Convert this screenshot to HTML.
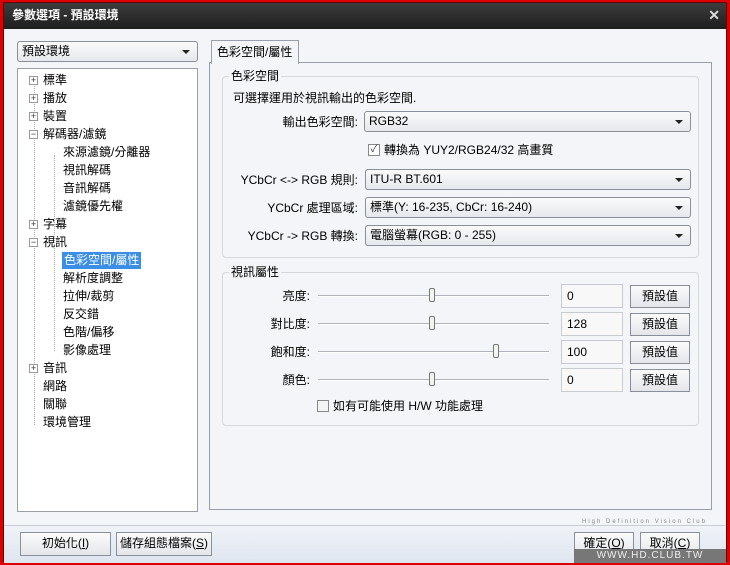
<!DOCTYPE html><html><head><meta charset="utf-8"><style>
*{box-sizing:border-box;margin:0;padding:0}
body{width:730px;height:565px;overflow:hidden;font-family:"Liberation Sans","Noto Sans CJK TC",sans-serif;font-size:12px;line-height:15px;color:#000;background:#d00}
.win{position:absolute;left:3px;top:2px;width:724px;height:560px;background:#f4f5f8;border:1px solid #600}
.title{position:absolute;left:0;top:0;width:100%;height:26px;background:linear-gradient(#3c3c3c,#1e1e1e);color:#fff;font-weight:bold;font-size:12px;line-height:24px;padding-left:8px}
.x{position:absolute;right:6px;top:0;color:#ddd;font-size:14px}
.a{position:absolute}
.combo{position:absolute;border:1px solid #8a8f99;border-radius:3px;background:linear-gradient(#fafafa,#e6e8ec);height:21px;line-height:19px;padding-left:4px;font-size:12px}
.combo:after{content:"";position:absolute;right:7px;top:8px;border:4px solid transparent;border-top:4px solid #222}
.box{position:absolute;border:1px solid #9aa0aa;background:#fff}
.grp{position:absolute;border:1px solid #d6d8dc;border-radius:4px}
.gl{position:absolute;top:-8px;left:6px;background:#f4f5f8;padding:0 2px}
.btn{position:absolute;border:1px solid #8a8f99;background:linear-gradient(#fbfbfb,#e4e6ea);text-align:center;line-height:21px;height:23px}
.edit{position:absolute;border:1px solid #c8cbd0;background:#f8f8f8;height:24px;line-height:22px;padding-left:5px;width:62px}
.trk{position:absolute;height:2px;background:#b0b4ba;border-bottom:1px solid #fff;width:231px}
.thm{position:absolute;width:6px;height:14px;border:1px solid #777;border-radius:2px;background:#f3f3f3;top:-7px}
.t{position:absolute;white-space:nowrap}
.pl{position:absolute;width:9px;height:9px;border:1px solid #999;background:#fff;font-size:9px;line-height:7px;text-align:center;color:#333}
.r{text-align:right}
</style></head><body><div class="win">
<div class="title">參數選項 - 預設環境<span class="x">✕</span></div>
<div class="combo" style="left:13px;top:38px;width:181px">預設環境</div>
<div class="box" style="left:13px;top:65px;width:181px;height:444px">
<div style="position:absolute;left:16px;top:14px;width:0;height:342px;border-left:1px dotted #aaa"></div>
<div style="position:absolute;left:36px;top:86px;width:0;height:104px;border-left:1px dotted #aaa"></div>
<div style="position:absolute;left:36px;top:176px;width:0;height:106px;border-left:1px dotted #aaa"></div>
</div>
<div class="a" style="left:13px;top:65px;width:181px">
<div class="pl" style="left:12px;top:8px">+</div><div class="t" style="left:26px;top:5px">標準</div>
<div class="pl" style="left:12px;top:26px">+</div><div class="t" style="left:26px;top:23px">播放</div>
<div class="pl" style="left:12px;top:44px">+</div><div class="t" style="left:26px;top:41px">裝置</div>
<div class="pl" style="left:12px;top:62px">−</div><div class="t" style="left:26px;top:59px">解碼器/濾鏡</div>
<div class="t" style="left:46px;top:77px">來源濾鏡/分離器</div>
<div class="t" style="left:46px;top:95px">視訊解碼</div>
<div class="t" style="left:46px;top:113px">音訊解碼</div>
<div class="t" style="left:46px;top:131px">濾鏡優先權</div>
<div class="pl" style="left:12px;top:152px">+</div><div class="t" style="left:26px;top:149px">字幕</div>
<div class="pl" style="left:12px;top:170px">−</div><div class="t" style="left:26px;top:167px">視訊</div>
<div class="t" style="left:45px;top:184px;background:#3a8ee6;color:#fff;padding:1px 2px">色彩空間/屬性</div>
<div class="t" style="left:46px;top:203px">解析度調整</div>
<div class="t" style="left:46px;top:221px">拉伸/裁剪</div>
<div class="t" style="left:46px;top:239px">反交錯</div>
<div class="t" style="left:46px;top:257px">色階/偏移</div>
<div class="t" style="left:46px;top:275px">影像處理</div>
<div class="pl" style="left:12px;top:296px">+</div><div class="t" style="left:26px;top:293px">音訊</div>
<div class="t" style="left:26px;top:311px">網路</div>
<div class="t" style="left:26px;top:329px">關聯</div>
<div class="t" style="left:26px;top:347px">環境管理</div>
</div>
<div class="box" style="left:205px;top:59px;width:503px;height:448px;background:#f4f5f8;border-color:#9aa0aa"></div>
<div class="a" style="left:207px;top:37px;width:88px;height:24px;border:1px solid #9aa0aa;border-bottom:none;background:#f4f5f8;padding:4px 0 0 5px">色彩空間/屬性</div>
<div class="grp" style="left:218px;top:73px;width:477px;height:182px"><span class="gl">色彩空間</span></div>
<div class="t" style="left:229px;top:88px">可選擇運用於視訊輸出的色彩空間.</div>
<div class="t r" style="left:200px;width:154px;top:112px">輸出色彩空間:</div>
<div class="combo" style="left:360px;top:108px;width:327px">RGB32</div>
<div class="a" style="left:364px;top:141px;width:12px;height:12px;border:1px solid #888;background:#fff;font-size:10px;line-height:10px;text-align:center;color:#335">✓</div>
<div class="t" style="left:380px;top:140px">轉換為 YUY2/RGB24/32 高畫質</div>
<div class="t r" style="left:200px;width:154px;top:170px">YCbCr &lt;-&gt; RGB 規則:</div>
<div class="combo" style="left:361px;top:166px;width:326px">ITU-R BT.601</div>
<div class="t r" style="left:200px;width:154px;top:198px">YCbCr 處理區域:</div>
<div class="combo" style="left:361px;top:194px;width:326px">標準(Y: 16-235, CbCr: 16-240)</div>
<div class="t r" style="left:200px;width:154px;top:226px">YCbCr -&gt; RGB 轉換:</div>
<div class="combo" style="left:361px;top:222px;width:326px">電腦螢幕(RGB: 0 - 255)</div>
<div class="grp" style="left:218px;top:269px;width:477px;height:154px"><span class="gl">視訊屬性</span></div>
<div class="t r" style="left:200px;width:106px;top:286px">亮度:</div>
<div class="trk" style="left:314px;top:292px"><div class="thm" style="left:111px"></div></div>
<div class="edit" style="left:557px;top:281px">0</div><div class="btn" style="left:626px;top:282px;width:60px">預設值</div>
<div class="t r" style="left:200px;width:106px;top:314px">對比度:</div>
<div class="trk" style="left:314px;top:320px"><div class="thm" style="left:111px"></div></div>
<div class="edit" style="left:557px;top:309px">128</div><div class="btn" style="left:626px;top:310px;width:60px">預設值</div>
<div class="t r" style="left:200px;width:106px;top:342px">飽和度:</div>
<div class="trk" style="left:314px;top:348px"><div class="thm" style="left:175px"></div></div>
<div class="edit" style="left:557px;top:337px">100</div><div class="btn" style="left:626px;top:338px;width:60px">預設值</div>
<div class="t r" style="left:200px;width:106px;top:370px">顏色:</div>
<div class="trk" style="left:314px;top:376px"><div class="thm" style="left:111px"></div></div>
<div class="edit" style="left:557px;top:365px">0</div><div class="btn" style="left:626px;top:366px;width:60px">預設值</div>
<div class="a" style="left:313px;top:397px;width:12px;height:12px;border:1px solid #888;background:#f4f4f4"></div>
<div class="t" style="left:329px;top:396px">如有可能使用 H/W 功能處理</div>
<div class="a" style="left:0;top:522px;width:100%;height:38px;border-top:1px solid #c8ccd4;background:linear-gradient(#f0f3f8,#dfe5ef)"></div>
<div class="btn" style="left:16px;top:529px;width:91px;height:24px">初始化(<u>I</u>)</div>
<div class="btn" style="left:112px;top:529px;width:96px;height:24px">儲存組態檔案(<u>S</u>)</div>
<div class="btn" style="left:570px;top:529px;width:60px;height:24px">確定(<u>O</u>)</div>
<div class="btn" style="left:636px;top:529px;width:60px;height:24px">取消(<u>C</u>)</div>
<div class="t" style="left:578px;top:512px;font-size:6px;letter-spacing:2px;color:#888">High Definition Vision Club</div>
<div class="a" style="left:570px;top:546px;width:152px;height:14px;background:#777;color:#eee;font-size:10px;text-align:center;line-height:14px;letter-spacing:1px">WWW.HD.CLUB.TW</div>
</div></body></html>
